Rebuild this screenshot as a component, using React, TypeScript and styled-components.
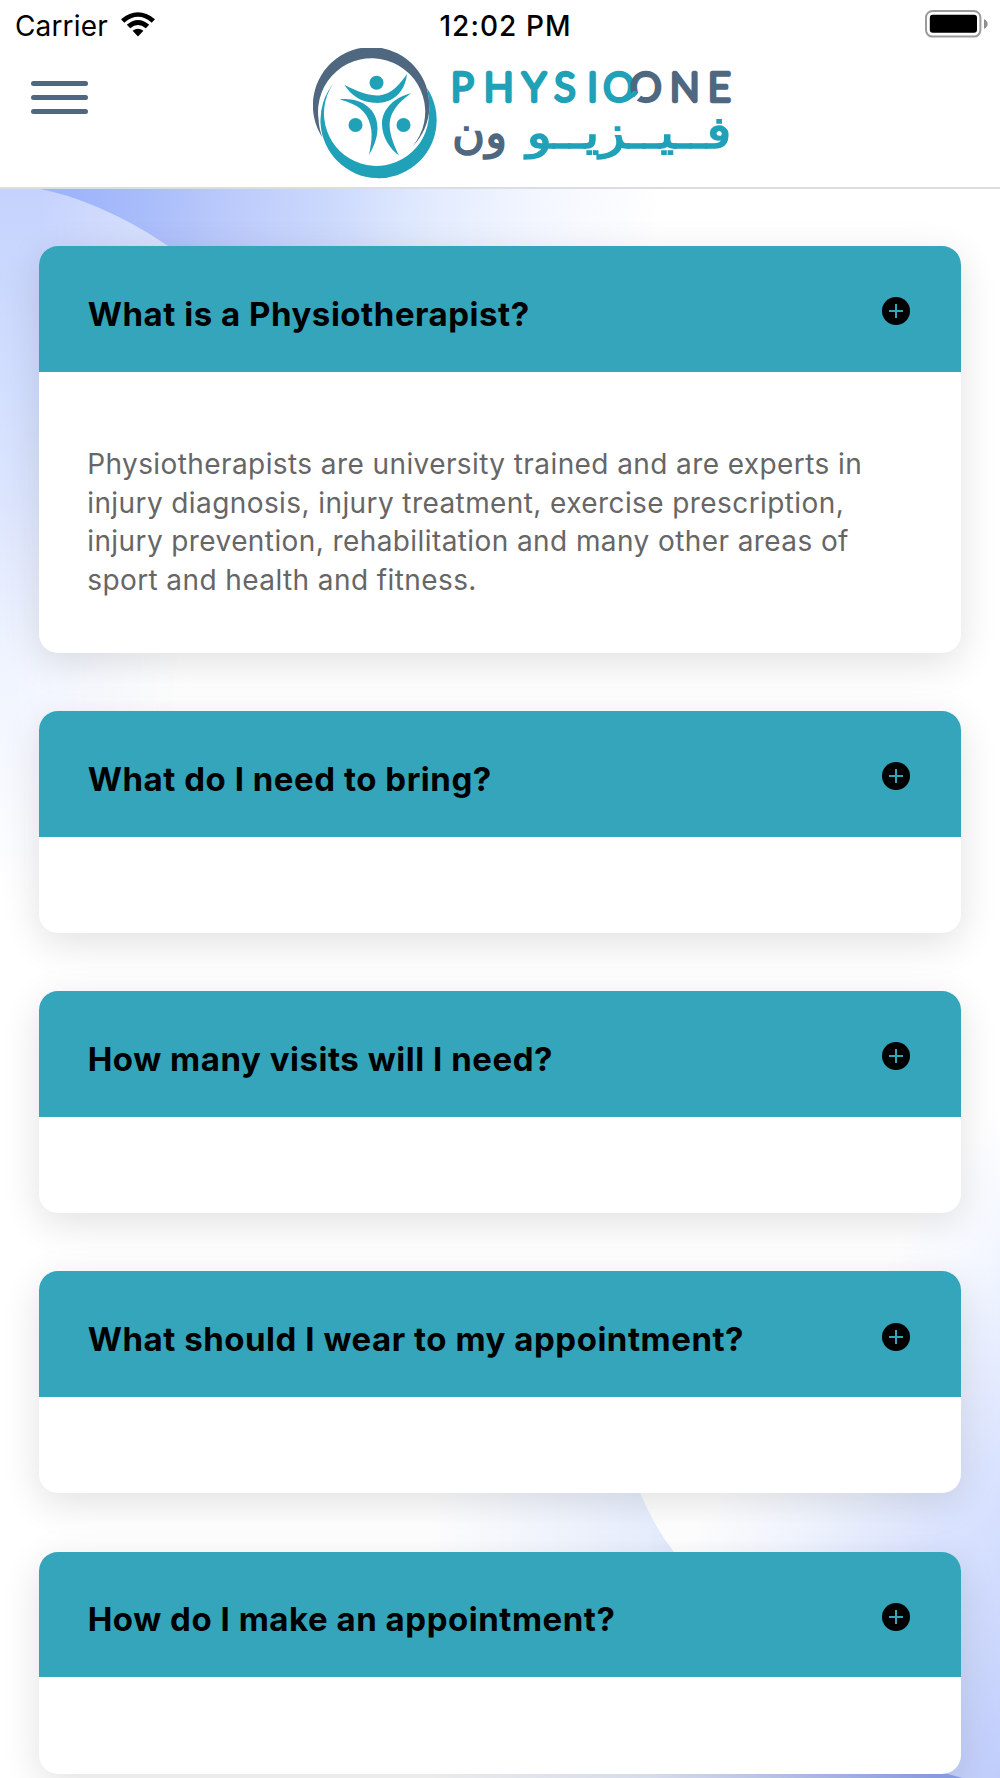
import React from "react";
import styled, { createGlobalStyle } from "styled-components";

const TEAL = "#20a1b8";
const SLATE = "#4f6880";

const GlobalStyle = createGlobalStyle`
  * { box-sizing: border-box; }
  body { margin: 0; background: #fff; font-family: Inter, "Liberation Sans", sans-serif; }
`;

const Screen = styled.div`
  display: flex;
  flex-direction: column;
  width: 1000px;
  height: 1778px;
  overflow: hidden;
  background: #fff;
`;

const StatusBar = styled.div`
  display: grid;
  grid-template-columns: 1fr auto 1fr;
  align-items: center;
  height: 48px;
  flex: none;
  padding: 3px 12px 0 15px;
  font-size: 28px;
  color: #000;
`;

const Carrier = styled.div`
  display: flex;
  align-items: center;
  gap: 13px;
  letter-spacing: 0.15px;
`;

const WifiSvg = styled.svg`
  width: 34px;
  height: 25px;
  margin-bottom: 2px;
`;

const Clock = styled.div`
  padding-left: 8px;
  font-weight: 500;
  letter-spacing: 1.05px;
`;

const BatterySlot = styled.div`
  display: flex;
  justify-content: flex-end;
  padding-bottom: 4px;
`;

const Header = styled.header`
  display: grid;
  grid-template-columns: 282px 1fr;
  height: 141px;
  flex: none;
  padding-left: 31px;
  border-bottom: 2px solid #dcdde2;
`;

const MenuButton = styled.button`
  display: flex;
  flex-direction: column;
  gap: 9px;
  width: 57px;
  height: 33px;
  margin-top: 33px;
  padding: 0;
  border: 0;
  background: none;
`;

const MenuLine = styled.span`
  height: 5px;
  border-radius: 3px;
  background: ${SLATE};
`;

const LogoSvg = styled.svg`
  display: block;
  width: 424px;
  height: 136px;
`;

const Content = styled.main`
  position: relative;
  display: flex;
  flex-direction: column;
  flex: 1;
  min-height: 0;
  gap: 58.2px;
  padding: 57.3px 38.7px 0;
`;

const Backdrop = styled.svg`
  position: absolute;
  inset: 0;
  width: 1000px;
  height: 1589px;
`;

const Card = styled.section`
  position: relative;
  flex: none;
  border-radius: 19px;
  background: #fff;
  box-shadow: 0 10px 38px rgba(0, 0, 0, 0.12);
  overflow: hidden;
`;

const CardHeader = styled.div`
  display: flex;
  align-items: center;
  justify-content: space-between;
  height: 125.6px;
  padding: 10px 51px 0 49px;
  background: #35a5bb;
`;

const Question = styled.h2`
  margin: 0;
  font-size: 33px;
  font-weight: 700;
  line-height: 40px;
  letter-spacing: 0.53px;
  white-space: nowrap;
  color: #000;
`;

const PlusIcon = styled.svg`
  width: 28px;
  height: 28px;
  margin-bottom: 5.4px;
`;

const CardBody = styled.div<{ $open: boolean }>`
  height: ${(p) => (p.$open ? 281 : 96.4)}px;
  padding: 73px 48.5px 0;
`;

const Line = styled.div`
  font-size: 28px;
  line-height: 38.65px;
  letter-spacing: 0.41px;
  white-space: nowrap;
  color: #666;
`;

type Item = { q: string; lines?: string[] };

const items: Item[] = [
  {
    q: "What is a Physiotherapist?",
    lines: [
      "Physiotherapists are university trained and are experts in",
      "injury diagnosis, injury treatment, exercise prescription,",
      "injury prevention, rehabilitation and many other areas of",
      "sport and health and fitness.",
    ],
  },
  { q: "What do I need to bring?" },
  { q: "How many visits will I need?" },
  { q: "What should I wear to my appointment?" },
  { q: "How do I make an appointment?" },
];

const Wifi = () => (
  <WifiSvg viewBox="0 0 34 25">
    <path d="M0 7.2Q17-6.6 34 7.2L30.7 10.7Q17-1 3.3 10.7Z" />
    <path d="M5.8 12.8Q17 3.2 28.2 12.8L24.8 16.2Q17 9.6 9.2 16.2Z" />
    <path d="M11.6 18.7Q17 14.6 22.4 18.7L17 24.4Z" />
  </WifiSvg>
);

const Battery = () => (
  <svg width="63" height="28" viewBox="0 0 63 28">
    <rect x="1" y="1" width="54.4" height="25.6" rx="6.5" fill="none" stroke="#9b9b9b" strokeWidth="2" />
    <rect x="4.8" y="4.8" width="47.2" height="18" rx="3" />
    <path d="M59 9Q62.600 11 62.600 14T59 19Z" fill="#8d8d8d" />
  </svg>
);

/* Coordinates inside the logo follow the page, so the view box starts at 313,48. */
const Logo = () => (
  <LogoSvg viewBox="313 48 424 136">
    <path fill={SLATE} d="M322.500 137.500A58.300 58.300 0 1 1 412.500 146.500A53.600 53.600 0 1 0 318.500 119Q319 129 322.500 137.500Z" />
    <path fill={TEAL} d="M333 84A58.100 58.100 0 1 0 427 88Q430 100 429 114A52.500 52.500 0 1 1 333 84Z" />
    <g fill={TEAL}>
      <circle cx="376.500" cy="82.800" r="7" />
      <circle cx="355.500" cy="125" r="7" />
      <circle cx="403.500" cy="125" r="7" />
      <path d="M344.300 84.800C358 92 370 96 379 95.500C392 94 400 84 407 74C405 92 393 103 377 103C361 103 351 95 344.300 84.800Z" />
      <path d="M339.500 99.300C360 97 377.500 108 377.500 128C377.500 139 373 148 369 155C372 140 374 128 366 115C359 105 350 103 339.500 99.300Z" />
      <path d="M411 93.300C396 97 382 108 382 124C382 137 390 149 399 155.500C391 139 386 124 393 112C398 103 404 99 411 93.300Z" />
    </g>
    <g fontFamily="Lato, sans-serif" fontSize="39" fontWeight="300" strokeWidth="4.300" strokeLinejoin="round" strokeLinecap="round">
      <text y="100.600" x="451 484 522.500 554.500 587.500 603.500" fill={TEAL} stroke={TEAL}>PHYSIO</text>
      <ellipse cx="647" cy="86.600" rx="13" ry="13" fill="#fff" />
      <text y="100.600" x="630.500 670 708" fill={SLATE} stroke={SLATE}>ONE</text>
      <path d="M640.500 93Q636 99.500 629 103" fill="none" stroke="#fff" strokeWidth="4" />
      <path d="M638 91Q635.500 98.500 625 101.500L622 98Q630 96 633 91Z" fill={TEAL} />
    </g>
    <g fontFamily="'DejaVu Sans', sans-serif" fontSize="45" strokeWidth="1.500" direction="rtl">
      <text x="731.500" y="147.500" textLength="205" lengthAdjust="spacingAndGlyphs" fill={TEAL} stroke={TEAL}>فــيــزيــو</text>
      <text x="507" y="147.500" textLength="55" lengthAdjust="spacingAndGlyphs" fill={SLATE} stroke={SLATE}>ون</text>
    </g>
  </LogoSvg>
);

const PageBackdrop = () => (
  <Backdrop viewBox="0 189 1000 1589">
    <defs>
      <linearGradient id="top" gradientUnits="userSpaceOnUse" x1="60" y1="180" x2="660" y2="250">
        <stop offset="0" stopColor="#9db3fb" />
        <stop offset="0.15" stopColor="#a9bdfb" />
        <stop offset="0.27" stopColor="#bac9fb" />
        <stop offset="0.45" stopColor="#ccd9fd" />
        <stop offset="0.62" stopColor="#e3ecfe" />
        <stop offset="0.8" stopColor="#f4f7ff" />
        <stop offset="1" stopColor="#fff" />
      </linearGradient>
      <linearGradient id="left" x1="0" y1="0" x2="0" y2="1">
        <stop offset="0" stopColor="#c5d2fd" />
        <stop offset="0.3" stopColor="#d3e0fe" />
        <stop offset="0.45" stopColor="#dde6fe" />
        <stop offset="0.64" stopColor="#eef3ff" />
        <stop offset="1" stopColor="#fff" />
      </linearGradient>
      <linearGradient id="leftTint">
        <stop offset="0.2" stopColor="#fff" stopOpacity="0" />
        <stop offset="1" stopColor="#fff" stopOpacity="0.35" />
      </linearGradient>
      <linearGradient id="leftFade">
        <stop offset="0" stopColor="#fff" stopOpacity="0" />
        <stop offset="1" stopColor="#fff" />
      </linearGradient>
      <linearGradient id="fadeIn" x1="0" y1="0" x2="0" y2="1">
        <stop offset="0" stopColor="#000" />
        <stop offset="0.5" stopColor="#fff" />
      </linearGradient>
      <mask id="fadeMask">
        <rect y="400" width="191" height="500" fill="url(#fadeIn)" />
      </mask>
      <linearGradient id="wash" gradientUnits="userSpaceOnUse" x1="430" y1="0" x2="950" y2="0">
        <stop offset="0" stopColor="#fff" />
        <stop offset="0.42" stopColor="#e8effe" />
        <stop offset="0.56" stopColor="#d5dffb" />
        <stop offset="1" stopColor="#8ea3ee" />
      </linearGradient>
      <linearGradient id="right" gradientUnits="userSpaceOnUse" x1="679" y1="1549" x2="1000" y2="1778">
        <stop offset="0" stopColor="#fff" />
        <stop offset="0.22" stopColor="#f2f6ff" />
        <stop offset="0.52" stopColor="#dbe4ff" />
        <stop offset="0.74" stopColor="#cfdafd" />
        <stop offset="1" stopColor="#c0cdfc" />
      </linearGradient>
      <clipPath id="leftClip">
        <path d="M0 189H40C85 198 130 220 168 246V289H0Z" />
      </clipPath>
    </defs>
    <rect y="189" width="720" height="120" fill="url(#top)" />
    <path d="M0 189H40C85 198 130 220 168 246L190 265V900H0Z" fill="url(#left)" />
    <rect y="189" width="190" height="100" fill="url(#leftTint)" clipPath="url(#leftClip)" />
    <rect y="400" width="191" height="500" fill="url(#leftFade)" mask="url(#fadeMask)" />
    <rect x="191" y="300" width="530" height="600" fill="#fff" />
    <rect x="430" y="1480" width="570" height="298" fill="url(#wash)" />
    <path d="M560 1000L640 1493Q655 1528 674 1552C740 1650 830 1740 944 1773L1000 1788V1000Z" fill="url(#right)" />
  </Backdrop>
);

export default function App() {
  return (
    <>
      <GlobalStyle />
      <Screen>
        <StatusBar>
          <Carrier>Carrier <Wifi /></Carrier>
          <Clock>12:02 PM</Clock>
          <BatterySlot><Battery /></BatterySlot>
        </StatusBar>
        <Header>
          <MenuButton aria-label="Menu"><MenuLine /><MenuLine /><MenuLine /></MenuButton>
          <Logo />
        </Header>
        <Content>
          <PageBackdrop />
          {items.map((item) => (
            <Card key={item.q}>
              <CardHeader>
                <Question>{item.q}</Question>
                <PlusIcon viewBox="0 0 28 28">
                  <circle cx="14" cy="14" r="14" />
                  <path d="M14 7V21M7 14H21" stroke="#35a5bb" strokeWidth="2" />
                </PlusIcon>
              </CardHeader>
              <CardBody $open={!!item.lines}>
                {item.lines?.map((line) => <Line key={line}>{line}</Line>)}
              </CardBody>
            </Card>
          ))}
        </Content>
      </Screen>
    </>
  );
}
